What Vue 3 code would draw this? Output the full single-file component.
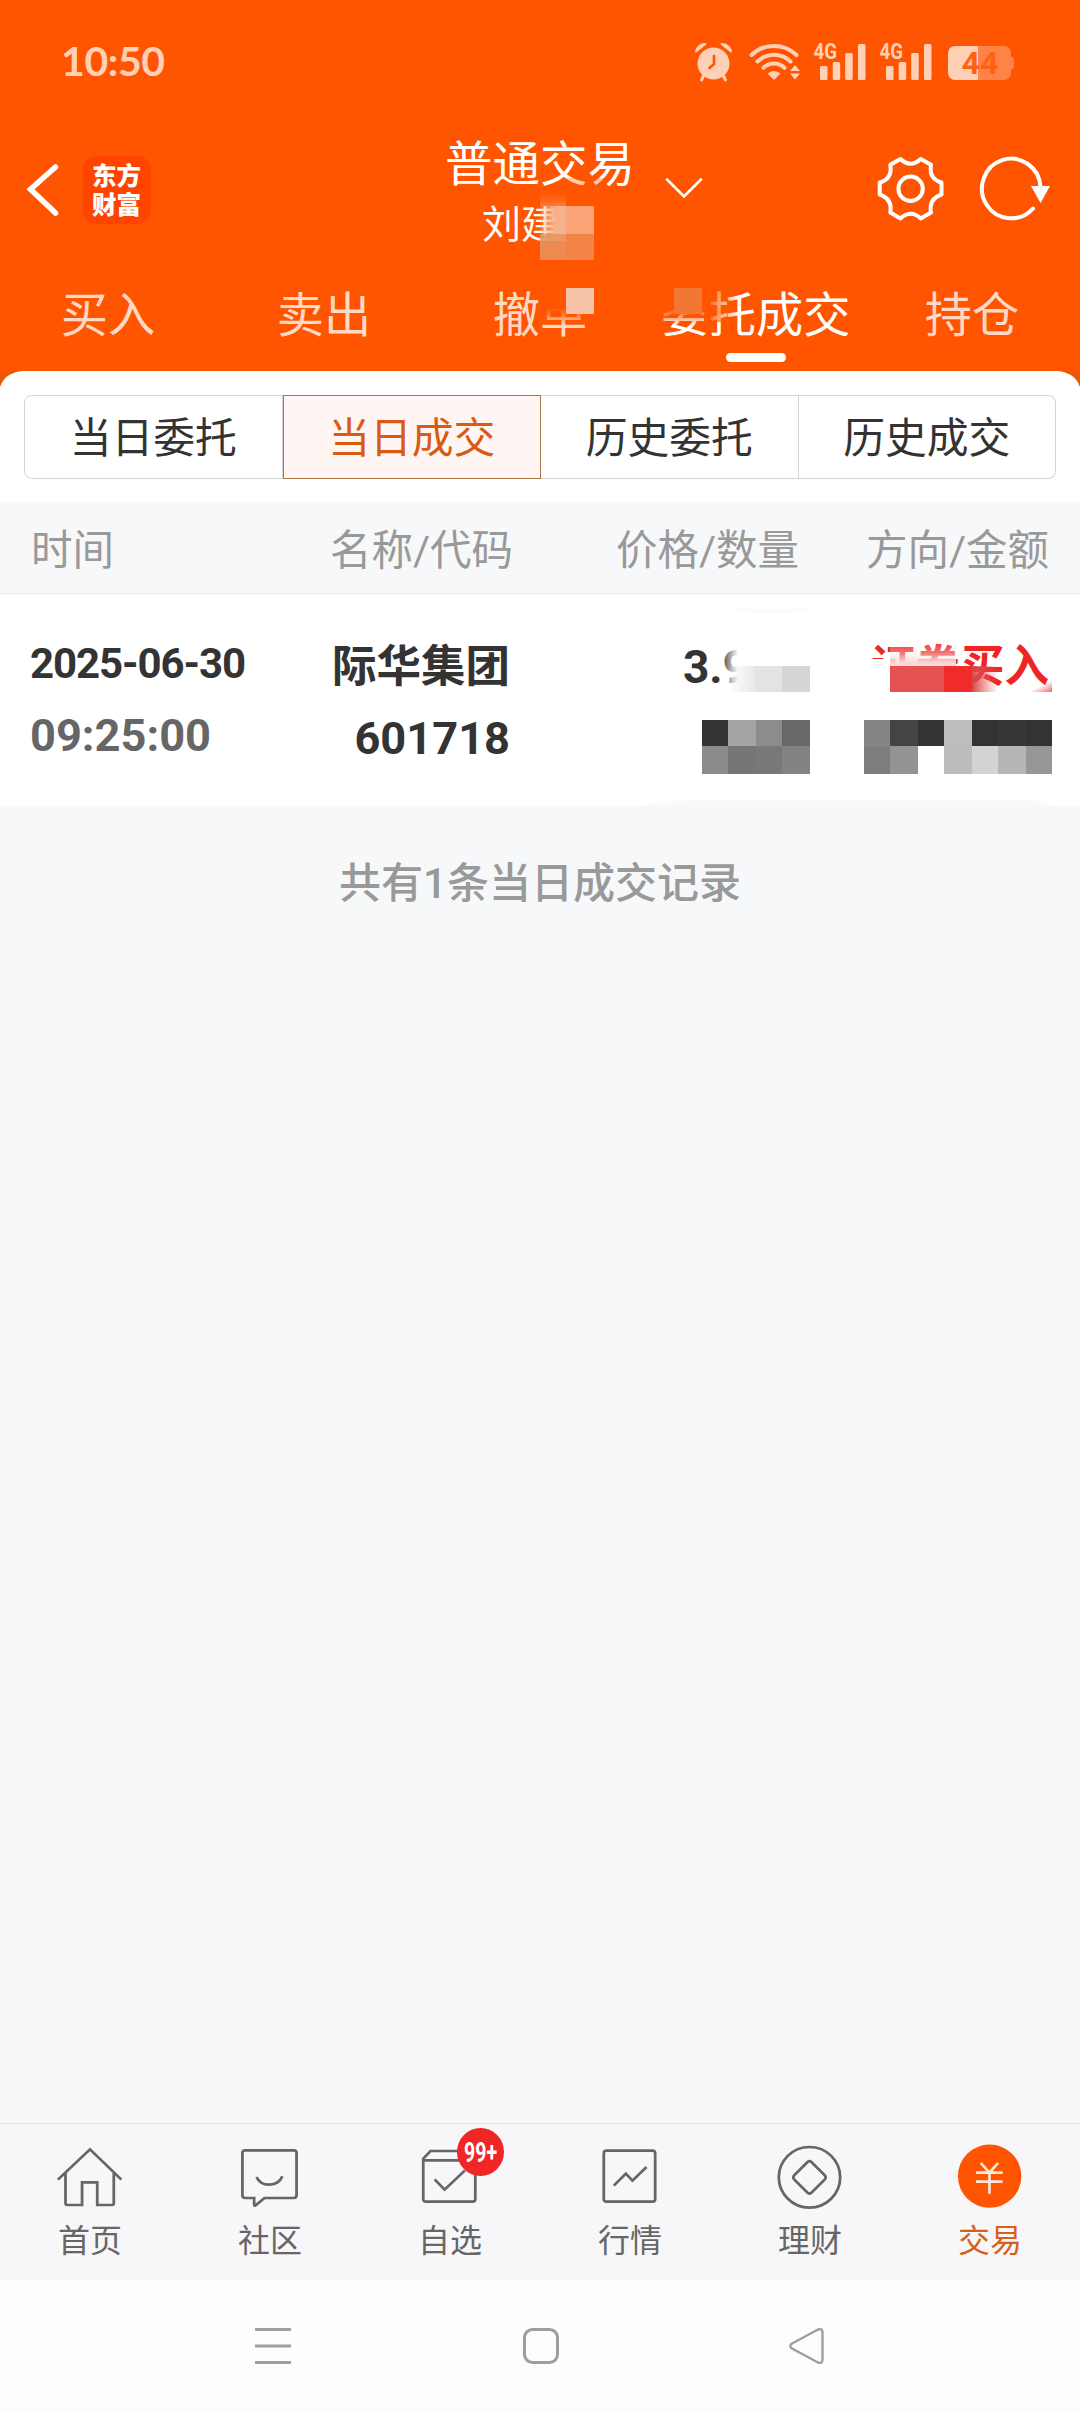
<template>
  <div class="screen">
    <header class="header">
      <div class="status">
        <span class="clock">10:50</span>
        <svg class="status-icons" viewBox="690 36 330 50">
          <g fill="#ffcfb6">
            <!-- alarm -->
            <circle cx="713.5" cy="63.5" r="16" />
            <path d="M696 51.500 A9 9 0 0 1 705.500 44 Z" stroke="#ffcfb6" stroke-width="2" stroke-linejoin="round" />
            <path d="M731 51.500 A9 9 0 0 0 721.500 44 Z" stroke="#ffcfb6" stroke-width="2" stroke-linejoin="round" />
            <path d="M704 75 l-2.500 5 M723 75 l2.500 5" stroke="#ffcfb6" stroke-width="3" stroke-linecap="round" />
            <path d="M714 56 V64 L709.500 68" fill="none" stroke="#f50" stroke-width="2.600" stroke-linecap="round" />
            <!-- wifi -->
            <path d="M774 80 l-6.500 -6.500 a9.500 9.500 0 0 1 13 0 z" />
            <g fill="none" stroke="#ffcfb6" stroke-width="4" stroke-linecap="round">
              <path d="M751.500 55 A32.500 32.500 0 0 1 796.500 55" />
              <path d="M757.500 61.500 A23.500 23.500 0 0 1 790.500 61.500" />
              <path d="M763.500 67.800 A15 15 0 0 1 784.500 67.800" />
            </g>
            <path d="M795 65 l5 6 h-10 z M795 79.500 l5 -6 h-10 z" />
            <!-- signals -->
            <g v-for="x in [0, 66]" :key="x" :transform="`translate(${x} 0)`">
              <text x="813.500" y="59" textLength="23.500" lengthAdjust="spacingAndGlyphs" class="net">4G</text>
              <rect x="820" y="66" width="7.500" height="14" rx="1.500" />
              <rect x="832.700" y="62" width="7.500" height="18" rx="1.500" />
              <rect x="845.200" y="53" width="7.500" height="27" rx="1.500" />
              <rect x="858" y="44" width="7.500" height="36" rx="1.500" />
            </g>
            <!-- battery -->
            <path d="M978 46 H1004 a7 7 0 0 1 7 7 V57 h1 a2 2 0 0 1 2 2 V67 a2 2 0 0 1 -2 2 h-1 V73 a7 7 0 0 1 -7 7 H978 Z" fill="#ff8346" />
            <path d="M978 46 H955 a7 7 0 0 0 -7 7 V73 a7 7 0 0 0 7 7 H978 Z" />
            <text x="961.500" y="74" textLength="37" lengthAdjust="spacingAndGlyphs" class="charge">44</text>
          </g>
        </svg>
      </div>

      <div class="navbar">
        <div class="nav-side">
          <svg class="back" viewBox="24 156 40 70">
            <path d="M55.500 167 L30.500 189.300 L55.500 213" fill="none" stroke="#fff" stroke-width="5.500" stroke-linecap="round" />
          </svg>
          <div class="logo">东方财富</div>
        </div>
        <div class="titles">
          <div class="title">普通交易</div>
          <div class="owner">刘建</div>
        </div>
        <div class="nav-side right">
          <svg class="arrow" viewBox="662 170 46 34">
            <path d="M667 179.500 L684 196.500 L701 179.500" fill="none" stroke="#fff" stroke-width="2.600" stroke-linecap="round" />
          </svg>
          <svg class="tools" viewBox="872 150 184 76">
            <g fill="none" stroke="#fff" stroke-width="4">
              <circle cx="910.600" cy="188.700" r="12.200" />
              <path stroke-linejoin="round" d="M900.500 159 Q910.600 168.500 920.800 159 L931 164.800 Q928.500 178.500 941.500 182.500 V194.500 Q928.500 199 931 212.500 L920.800 218.500 Q910.600 209 900.500 218.500 L890.300 212.500 Q892.700 199 879.700 194.500 V182.500 Q892.700 178.500 890.300 164.800 Z" />
              <path d="M1033 208.500 A29.300 29.800 0 1 1 1040.500 187" stroke-linecap="round" />
            </g>
            <path d="M1031 186 H1050 L1040.500 203 Z" fill="#fff" />
          </svg>
        </div>
      </div>

      <nav class="tabs">
        <div v-for="tab in tabs" :key="tab" class="tab" :class="{ active: tab === '委托成交' }">{{ tab }}</div>
      </nav>

      <!-- privacy mosaic -->
      <svg class="mask" viewBox="0 0 1080 386">
        <defs>
          <linearGradient id="up" x1="0" y1="1" x2="0" y2="0">
            <stop offset="0" stop-color="#fb7c3c" />
            <stop offset="1" stop-color="#f50" stop-opacity="0" />
          </linearGradient>
          <linearGradient id="wipe" x1="0" y1="0" x2="0" y2="1">
            <stop offset="0" stop-color="#f50" />
            <stop offset="0.550" stop-color="#f50" />
            <stop offset="1" stop-color="#f50" stop-opacity="0" />
          </linearGradient>
          <linearGradient id="side" x1="0" y1="0" x2="1" y2="0">
            <stop offset="0" stop-color="#f6b18c" stop-opacity="0.200" />
            <stop offset="0.600" stop-color="#f6b18c" />
          </linearGradient>
          <linearGradient id="edge" x1="0" y1="0" x2="1" y2="0">
            <stop offset="0" stop-color="#f50" />
            <stop offset="1" stop-color="#f50" stop-opacity="0" />
          </linearGradient>
        </defs>
        <rect x="540" y="188" width="26" height="18" fill="url(#up)" />
        <rect x="566" y="178" width="38" height="12" fill="#f50" opacity="0.300" />
        <rect x="540" y="206" width="26" height="35" fill="url(#side)" />
        <rect x="540" y="234" width="26" height="26" fill="#e99460" opacity="0.850" />
        <rect x="566" y="206" width="28" height="28" fill="#faa477" />
        <rect x="566" y="234" width="28" height="26" fill="#f48446" />
        <rect x="540" y="288" width="54" height="38" fill="url(#wipe)" />
        <rect x="566" y="288" width="28" height="26" fill="#f7c3a6" />
        <rect x="660" y="288" width="45" height="38" fill="url(#wipe)" />
        <rect x="704" y="288" width="34" height="34" fill="url(#edge)" />
        <rect x="674" y="288" width="28" height="26" fill="#f27733" />
      </svg>
    </header>

    <section class="card">
      <div class="segments">
        <div v-for="item in segments" :key="item" class="segment" :class="{ on: item === '当日成交' }">{{ item }}</div>
      </div>
    </section>

    <div class="grid thead">
      <span v-for="col in columns" :key="col">{{ col }}</span>
    </div>

    <section class="record">
      <div class="grid line first">
        <span class="date">2025-06-30</span>
        <span class="name">际华集团</span>
        <span class="price">3.9</span>
        <span class="side">证券买入</span>
      </div>
      <div class="grid line">
        <span class="time">09:25:00</span>
        <span class="code">601718</span>
      </div>
      <svg class="mask" viewBox="0 594 1080 212">
        <defs>
          <linearGradient id="fadeL" x1="0" y1="0" x2="1" y2="0">
            <stop offset="0" stop-color="#fff" stop-opacity="0.100" />
            <stop offset="1" stop-color="#fff" />
          </linearGradient>
          <linearGradient id="greyIn" x1="0" y1="0" x2="1" y2="0">
            <stop offset="0" stop-color="#eaeaea" stop-opacity="0" />
            <stop offset="1" stop-color="#e7e7e7" />
          </linearGradient>
          <linearGradient id="haze" x1="0" y1="0" x2="0" y2="1">
            <stop offset="0" stop-color="#fff" stop-opacity="0" />
            <stop offset="0.500" stop-color="#fdeaea" stop-opacity="0.400" />
            <stop offset="0.850" stop-color="#fbdada" stop-opacity="0.950" />
            <stop offset="1" stop-color="#fbdada" />
          </linearGradient>
          <linearGradient id="redOut" x1="0" y1="0" x2="1" y2="0">
            <stop offset="0" stop-color="#d94545" />
            <stop offset="1" stop-color="#ee6060" stop-opacity="0" />
          </linearGradient>
          <linearGradient id="corner" x1="0" y1="0" x2="1" y2="1">
            <stop offset="0.500" stop-color="#ee6060" stop-opacity="0" />
            <stop offset="1" stop-color="#f06a6a" />
          </linearGradient>
          <linearGradient id="soft" x1="0" y1="0" x2="0" y2="1">
            <stop offset="0" stop-color="#fff" />
            <stop offset="1" stop-color="#f8f9fb" />
          </linearGradient>
        </defs>
        <ellipse cx="772" cy="609" rx="38" ry="4" fill="url(#soft)" />
        <rect x="722" y="645" width="16" height="40" fill="url(#fadeL)" />
        <rect x="738" y="645" width="24" height="40" fill="#fff" />
        <rect x="728" y="666" width="27" height="26" fill="url(#greyIn)" />
        <rect x="866" y="659" width="24" height="32" fill="#fff" />
        <rect x="890" y="640" width="66" height="26" fill="url(#haze)" />
        <rect x="972" y="666" width="26" height="26" fill="url(#redOut)" />
        <rect x="1028" y="680" width="24" height="12" fill="url(#corner)" />
        <rect v-for="(b, i) in blocks" :key="i" :x="b[0]" :y="b[1]" :width="b[2]" :height="b[3]" :fill="b[4]" />
        <path d="M640 806 Q660 800 700 800 H1030 Q1048 800 1052 806 Z" fill="#f9fafb" />
      </svg>
    </section>

    <p class="summary">共有1条当日成交记录</p>

    <footer class="tabbar">
      <div class="entry">
        <svg viewBox="145 90 232 210" preserveAspectRatio="none">
          <path d="M168 209 L261 118 L352 209 M190 190 V280 q0 5 5 5 H238 V217 H282 V285 H325 q5 0 5 -5 V190" />
        </svg>
        <span>首页</span>
      </div>
      <div class="entry">
        <svg viewBox="668 90 232 210" preserveAspectRatio="none">
          <path d="M712 121 H853 q8 0 8 8 V256 q0 8 -8 8 H768 L742 286 q-4 3 -4 -3 V264 H712 q-8 0 -8 -8 V129 q0 -8 8 -8 Z M745 201 C758 232 806 232 820 199" />
        </svg>
        <span>社区</span>
      </div>
      <div class="entry">
        <svg viewBox="1190.600 90 232 210" preserveAspectRatio="none">
          <path d="M1228 151 H1380 V267 q0 8 -8 8 H1237 q-8 0 -8 -8 V146 L1250 123 H1360 L1380 151 M1262 208 L1291 239 L1350 181" />
        </svg>
        <span>自选</span>
        <b class="badge"><i>99+</i></b>
      </div>
      <div class="entry">
        <svg viewBox="145 90 232 210" preserveAspectRatio="none">
          <path d="M193 122 H326 q8 0 8 8 V267 q0 8 -8 8 H193 q-8 0 -8 -8 V130 q0 -8 8 -8 Z M214 227 L249 191 L268 212 L309 171" />
        </svg>
        <span>行情</span>
      </div>
      <div class="entry">
        <svg viewBox="668 90 232 210" preserveAspectRatio="none">
          <ellipse cx="782.500" cy="202" rx="89" ry="91" />
          <path d="M777 156 q5.500 -5 11 0 L827 196 q5 6 0 12 L788 248 q-5.500 5 -11 0 L738 208 q-5 -6 0 -12 Z" />
        </svg>
        <span>理财</span>
      </div>
      <div class="entry current">
        <svg viewBox="1190.600 90 232 210" preserveAspectRatio="none">
          <ellipse cx="1305.500" cy="198.500" rx="92" ry="95" class="coin" />
          <path class="yuan" d="M1280 159 L1305 188 L1330 159 M1266 188 H1343 M1266 215 H1343 M1305 188 V251" />
        </svg>
        <span>交易</span>
      </div>
    </footer>

    <div class="sysnav">
      <svg viewBox="253 2325 40 42"><path d="M255 2329.500 h36 M255 2346 h36 M255 2362.500 h36" /></svg>
      <svg viewBox="520 2325 40 42"><rect x="524.500" y="2329.500" width="33" height="33" rx="8" /></svg>
      <svg viewBox="787 2325 40 42"><path d="M792 2343.500 L818 2329.500 q4.500 -1.500 4.500 3 V2359.500 q0 4.500 -4.500 3 L792 2348.500 q-3.500 -2.500 0 -5 Z" stroke-width="2.400" /></svg>
    </div>
  </div>
</template>

<script setup>
const tabs = ['买入', '卖出', '撤单', '委托成交', '持仓']
const segments = ['当日委托', '当日成交', '历史委托', '历史成交']
const columns = ['时间', '名称/代码', '价格/数量', '方向/金额']

// x, y, width, height, color
const blocks = [
  [755, 666, 27, 26, '#e3e3e3'],
  [782, 666, 28, 26, '#d6d6d6'],
  [890, 666, 28, 26, '#e55151'],
  [918, 666, 26, 26, '#e55151'],
  [944, 666, 28, 26, '#f12a2a'],
  ...cells([702, 728, 756, 782, 810], 720, 26, ['#333', '#a4a4a4', '#8c8c8c', '#686868']),
  ...cells([702, 728, 756, 782, 810], 746, 28, ['#8b8b8b', '#767676', '#787878', '#838383']),
  ...cells([864, 890, 918, 944, 972, 998, 1026, 1052], 720, 26, ['#858585', '#444', '#333', '#bebebe', '#333', '#363636', '#333']),
  ...cells([864, 890, 918, 944, 972, 998, 1026, 1052], 746, 28, ['#7d7d7d', '#939393', '#fff', '#bcbcbc', '#d3d3d3', '#b6b6b6', '#979797'])
]

function cells(xs, y, h, colors) {
  return colors.map((c, i) => [xs[i], y, xs[i + 1] - xs[i], h, c])
}
</script>

<style>
body {
  margin: 0;
  background: #f7f8fa;
}
</style>

<style scoped>
.screen {
  width: 1080px;
  height: 2412px;
  display: flex;
  flex-direction: column;
  overflow: hidden;
  background: #f7f8fa;
  font-family: Roboto, 'Noto Sans CJK SC', sans-serif;
  color: #333;
}

.header {
  position: relative;
  height: 386px;
  flex: none;
  background: linear-gradient(#f50 371px, #ee5406 371px);
  color: #fff;
}

.status {
  height: 124px;
  box-sizing: border-box;
  padding: 36px 60px 0 61px;
  display: flex;
  justify-content: space-between;
}

.clock {
  font: 700 41px/50px Lato, sans-serif;
  letter-spacing: -0.4px;
  color: #ffcfb6;
}

.status-icons {
  width: 330px;
  height: 50px;
}

.net {
  font: 700 22.5px Roboto, sans-serif;
}

.charge {
  font: 700 31px Roboto, sans-serif;
  fill: #ff6212;
}

.navbar {
  height: 132px;
  display: flex;
  justify-content: space-between;
}

.nav-side {
  width: 418px;
  padding: 32px 0 0 24px;
  box-sizing: border-box;
  display: flex;
}

.back {
  width: 40px;
  height: 70px;
}

.logo {
  width: 68px;
  height: 68px;
  margin-left: 19px;
  padding: 4px 9px;
  box-sizing: border-box;
  border-radius: 14px;
  background: #ff4400;
  font: 900 24.5px/29px 'Noto Sans CJK SC', sans-serif;
}

.titles {
  width: 244px;
  text-align: center;
}

.title {
  margin-top: 13px;
  font-size: 47.5px;
  line-height: 56px;
  white-space: nowrap;
}

.owner {
  padding-left: 64px;
  text-align: left;
  font-size: 39px;
  line-height: 64px;
}

.right {
  padding: 26px 24px 0 0;
  justify-content: space-between;
}

.arrow {
  width: 46px;
  height: 34px;
  margin-top: 20px;
}

.tools {
  width: 184px;
  height: 76px;
}

.tabs {
  display: flex;
  height: 115px;
}

.tab {
  position: relative;
  flex: 1;
  text-align: center;
  white-space: nowrap;
  font-size: 47.2px;
  line-height: 120px;
  color: #ffd9c4;
}

.tab.active {
  color: #fff;
}

.tab.active::after {
  content: '';
  position: absolute;
  left: 78px;
  top: 97px;
  width: 60px;
  height: 9px;
  border-radius: 5px;
  background: #fff;
}

.mask {
  position: absolute;
  left: 0;
  top: 0;
  width: 100%;
  height: 100%;
}

.card {
  position: relative;
  height: 131px;
  flex: none;
  margin-top: -15px;
  padding: 24px 24px 0;
  box-sizing: border-box;
  border-radius: 24px 24px 0 0 / 19px 19px 0 0;
  background: #fff;
}

.segments {
  display: flex;
  height: 84px;
}

.segment {
  flex: 1;
  box-sizing: border-box;
  border: 1px solid #d3d5d7;
  border-left-width: 0;
  text-align: center;
  font-size: 41.8px;
  line-height: 86px;
}

.segment:first-child {
  border-left-width: 1px;
  border-radius: 8px 0 0 8px;
}

.segment:last-child {
  border-radius: 0 8px 8px 0;
}

.segment.on {
  border: 1px solid #ad7446;
  background: #fff6f3;
  color: #d95b12;
}

.grid {
  display: grid;
  grid-template-columns: 200px 279px 289px 250px;
  padding-left: 31px;
}

.grid span {
  text-align: right;
  white-space: nowrap;
}

.grid span:first-child {
  text-align: left;
}

.thead {
  grid-template-columns: 200px 282px 286px 250px;
  height: 91px;
  flex: none;
  line-height: 97px;
  font-size: 41.5px;
  color: #999;
  border-bottom: 1px solid #e9eaec;
}

.record {
  position: relative;
  height: 212px;
  flex: none;
  background: #fff;
  font-weight: 700;
}

.line {
  height: 72px;
  line-height: 72px;
  font-size: 44.5px;
}

.first {
  padding-top: 37px;
}

.grid .date {
  margin: -3px 0 0 -1px;
  font-size: 42px;
  letter-spacing: -1.1px;
}

.price {
  padding-right: 50px;
  font-size: 46px;
}

.side {
  color: #ee2525;
}

.time,
.code {
  font-size: 45.2px;
}

.grid .time {
  margin: -3px 0 0 -1px;
  color: #666;
}

.summary {
  margin: 48px 0 0;
  text-align: center;
  font-size: 42px;
  font-weight: 500;
  line-height: 60px;
  color: #999;
}

.tabbar {
  margin-top: auto;
  height: 157px;
  flex: none;
  box-sizing: border-box;
  border-top: 1px solid #e1e4e7;
  background: #f7f7fa;
  display: flex;
}

.entry {
  position: relative;
  flex: 1;
  display: flex;
  flex-direction: column;
  align-items: center;
  padding-top: 16px;
  font-size: 32px;
  line-height: 62px;
  color: #666;
}

.entry svg {
  width: 80px;
  height: 70px;
  flex: none;
  overflow: visible;
  fill: none;
  stroke: #666;
  stroke-width: 8;
}

.current {
  color: #d9601a;
}

.entry .coin {
  fill: #f50;
  stroke: none;
}

.entry .yuan {
  stroke: #ffe6da;
}

.badge {
  position: absolute;
  left: 97px;
  top: 4px;
  width: 47px;
  height: 48px;
  border-radius: 50%;
  background: #f02525;
  color: #fff;
  font-size: 28px;
  line-height: 49px;
  display: flex;
  justify-content: center;
}

.badge i {
  font-style: normal;
  transform: scaleX(0.7);
}

.sysnav {
  height: 132px;
  flex: none;
  display: flex;
  justify-content: space-between;
  padding: 45px 253px 0;
  box-sizing: border-box;
  background: #fdfdfd;
}

.sysnav svg {
  width: 40px;
  height: 42px;
  fill: none;
  stroke: #9e9e9e;
  stroke-width: 3;
}
</style>
